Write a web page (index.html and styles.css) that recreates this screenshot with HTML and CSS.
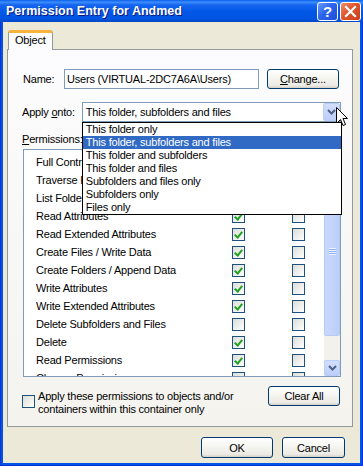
FILE: index.html
```html
<!DOCTYPE html>
<html lang="en">
<head>
    <meta charset="UTF-8">
    <title>Permission Entry for Andmed</title>
    <link rel="stylesheet" href="styles.css">
</head>
<body>
    <div class="window">
        <div class="titlebar">
            <span class="title">Permission Entry for Andmed</span>
            <span class="cap cap-help">?</span>
            <span class="cap cap-close">
                <svg viewBox="0 0 19 17" width="19" height="17">
                    <path d="M5 4 L14 13 M14 4 L5 13" stroke="#fff" stroke-width="2.2" stroke-linecap="square"/>
                </svg>
            </span>
        </div>

        <div class="client">
            <div class="tabs">
                <div class="tab">Object</div>
            </div>

            <div class="page">
                <div class="name-row">
                    <span class="lbl lbl-name">Name:</span>
                    <div class="textbox">Users (VIRTUAL-2DC7A6A\Users)</div>
                    <button class="btn btn-change"><u>C</u>hange...</button>
                </div>

                <div class="apply-row">
                    <span class="lbl lbl-apply">Apply <u>o</u>nto:</span>
                    <div class="combo">
                        <span class="combo-value">This folder, subfolders and files</span>
                        <span class="arrow-btn combo-arrow">
                            <svg viewBox="0 0 9 6" width="9" height="6"><path d="M1 1 L4.5 4.5 L8 1" fill="none" stroke="#4d6185" stroke-width="2"/></svg>
                        </span>
                        <ul class="dropdown">
                            <li>This folder only</li>
                            <li class="selected">This folder, subfolders and files</li>
                            <li>This folder and subfolders</li>
                            <li>This folder and files</li>
                            <li>Subfolders and files only</li>
                            <li>Subfolders only</li>
                            <li>Files only</li>
                        </ul>
                    </div>
                </div>

                <div class="perm-header">
                    <span class="perm-label"><u>P</u>ermissions:</span>
                    <span class="col-head">Allow</span>
                    <span class="col-head">Deny</span>
                </div>

                <div class="perm-list">
                    <div class="perm-rows">
                        <div class="row"><span class="perm-name">Full Control</span><span class="check"></span><span class="check"></span></div>
                        <div class="row"><span class="perm-name">Traverse Folder / Execute File</span><span class="check on"></span><span class="check"></span></div>
                        <div class="row"><span class="perm-name">List Folder / Read Data</span><span class="check on"></span><span class="check"></span></div>
                        <div class="row"><span class="perm-name">Read Attributes</span><span class="check on"></span><span class="check"></span></div>
                        <div class="row"><span class="perm-name">Read Extended Attributes</span><span class="check on"></span><span class="check"></span></div>
                        <div class="row"><span class="perm-name">Create Files / Write Data</span><span class="check on"></span><span class="check"></span></div>
                        <div class="row"><span class="perm-name">Create Folders / Append Data</span><span class="check on"></span><span class="check"></span></div>
                        <div class="row"><span class="perm-name">Write Attributes</span><span class="check on"></span><span class="check"></span></div>
                        <div class="row"><span class="perm-name">Write Extended Attributes</span><span class="check on"></span><span class="check"></span></div>
                        <div class="row"><span class="perm-name">Delete Subfolders and Files</span><span class="check"></span><span class="check"></span></div>
                        <div class="row"><span class="perm-name">Delete</span><span class="check on"></span><span class="check"></span></div>
                        <div class="row"><span class="perm-name">Read Permissions</span><span class="check on"></span><span class="check"></span></div>
                        <div class="row"><span class="perm-name">Change Permissions</span><span class="check"></span><span class="check"></span></div>
                    </div>
                    <div class="scrollbar">
                        <span class="arrow-btn sb-btn">
                            <svg viewBox="0 0 9 6" width="9" height="6"><path d="M1 5 L4.5 1.5 L8 5" fill="none" stroke="#4d6185" stroke-width="2"/></svg>
                        </span>
                        <span class="sb-thumb"><span class="grip"></span></span>
                        <span class="sb-track"></span>
                        <span class="arrow-btn sb-btn">
                            <svg viewBox="0 0 9 6" width="9" height="6"><path d="M1 1 L4.5 4.5 L8 1" fill="none" stroke="#4d6185" stroke-width="2"/></svg>
                        </span>
                    </div>
                </div>

                <div class="inherit-row">
                    <span class="check"></span>
                    <span class="inherit-text">Apply these permissions to objects and/or<br>containers within this container only</span>
                    <button class="btn btn-clear">Clear All</button>
                </div>
            </div>

            <div class="dialog-buttons">
                <button class="btn btn-ok">OK</button>
                <button class="btn btn-cancel">Cancel</button>
            </div>
        </div>

        <svg class="cursor" viewBox="0 0 12 20" width="12" height="20">
            <path d="M0.5 0.5 L0.5 16.5 L4.5 12.5 L7 18.5 L9.5 17.5 L7 11.5 L11.5 11.5 Z" fill="#fff" stroke="#000" stroke-width="1"/>
        </svg>
    </div>
</body>
</html>
```

FILE: styles.css
```css
* {
    margin: 0;
    padding: 0;
    box-sizing: border-box;
}

body {
    width: 363px;
    height: 466px;
    overflow: hidden;
    font-family: "Liberation Sans", Arial, sans-serif;
    font-size: 11px;
    letter-spacing: -0.2px;
    color: #000;
    background: #ece9d8;
}

.window {
    position: relative;
    width: 363px;
    height: 466px;
    display: flex;
    flex-direction: column;
    background: #0055e5;
    border: 1px solid #0831d9;
    border-top: none;
}

/* title bar */
.titlebar {
    height: 22px;
    margin: 0 -1px;
    display: flex;
    align-items: center;
    gap: 2px;
    padding: 0 2px 0 6px;
    background: linear-gradient(to bottom, #0a5fee 0%, #3d8ffc 10%, #1665f0 22%, #0058e6 55%, #0054e2 85%, #0347c6 100%);
}

.title {
    flex: 1;
    color: #fff;
    font-size: 12.5px;
    font-weight: 700;
    letter-spacing: 0;
    text-shadow: 1px 1px #0a1883;
}

.cap {
    width: 21px;
    height: 19px;
    border: 1px solid #fff;
    border-radius: 3px;
    display: flex;
    align-items: center;
    justify-content: center;
    color: #fff;
    font-weight: 700;
    font-size: 15px;
}

.cap-help {
    background: linear-gradient(135deg, #6b9cf8 0%, #2a64ee 45%, #1c50d8 100%);
}

.cap-close {
    background: linear-gradient(135deg, #f09070 0%, #e0542a 45%, #c8401a 100%);
}

/* client area */
.client {
    flex: 1;
    margin: 0 2px 2px;
    background: #ece9d8;
    padding: 8px 7px 0 4px;
    display: flex;
    flex-direction: column;
}

.tabs {
    display: flex;
    height: 19px;
    padding-left: 1px;
    position: relative;
    z-index: 1;
}

.tab {
    width: 45px;
    height: 20px;
    background: #fcfcfe;
    border: 1px solid #919b9c;
    border-bottom: none;
    border-top: 3px solid #f8b33c;
    border-radius: 3px 3px 0 0;
    padding: 1px 0 0 6px;
}

.page {
    height: 378px;
    border: 1px solid #919b9c;
    background: linear-gradient(to bottom, #fcfcfe, #f4f3ee);
    padding: 19px 11px 0 14px;
}

.name-row,
.apply-row {
    display: flex;
    align-items: center;
    height: 20px;
}

.apply-row {
    margin-top: 13px;
}

.lbl-name {
    width: 41px;
    margin-left: 1px;
}

.lbl-apply {
    width: 60px;
}

.textbox {
    width: 195px;
    height: 20px;
    border: 1px solid #7f9db9;
    background: #fff;
    padding: 3px 2px 0;
}

.btn {
    font: inherit;
    letter-spacing: inherit;
    color: #000;
    height: 20px;
    border: 1px solid #003c74;
    border-radius: 3px;
    background: linear-gradient(to bottom, #ffffff 0%, #f6f6f2 40%, #ecebe5 85%, #d6d0c5 100%);
}

.btn-change {
    width: 72px;
    margin-left: 8px;
}

/* combo box */
.combo {
    position: relative;
    width: 260px;
    height: 20px;
    border: 1px solid #7f9db9;
    background: #fff;
    display: flex;
    align-items: center;
    padding-left: 3px;
}

.combo-value {
    flex: 1;
}

.arrow-btn {
    display: flex;
    align-items: center;
    justify-content: center;
    background: linear-gradient(to bottom, #d2defc, #bccef9);
    border: 1px solid #b9cdf6;
    border-radius: 2px;
}

.combo-arrow {
    width: 17px;
    height: 18px;
    margin-right: 0;
}

.dropdown {
    position: absolute;
    top: 19px;
    left: -1px;
    width: 260px;
    list-style: none;
    background: #fff;
    border: 1px solid #000;
    z-index: 2;
}

.dropdown li {
    height: 13px;
    line-height: 13px;
    padding-left: 3px;
}

.dropdown .selected {
    background: #316ac5;
    color: #fff;
}

/* permissions list */
.perm-header {
    display: flex;
    height: 13px;
    line-height: 13px;
    margin-top: 11px;
}

.perm-label {
    width: 203px;
}

.col-head {
    width: 60px;
}

.perm-list {
    margin: 3px 0 0 1px;
    width: 318px;
    height: 228px;
    border: 1px solid #7f9db9;
    background: #fff;
    display: flex;
}

.perm-rows {
    flex: 1;
    padding-top: 3px;
    overflow: hidden;
}

.row {
    height: 18px;
    display: flex;
    align-items: center;
    padding-left: 12px;
}

.perm-name {
    width: 196px;
    white-space: nowrap;
    overflow: hidden;
}

.row .check + .check {
    margin-left: 47px;
}

.check {
    width: 13px;
    height: 13px;
    flex: none;
    border: 1px solid #1c5180;
    background: linear-gradient(135deg, #dcdcd7, #ffffff);
    position: relative;
}

.check.on::after {
    content: "";
    position: absolute;
    left: 3px;
    top: 1px;
    width: 3px;
    height: 6px;
    border-right: 2px solid #21a121;
    border-bottom: 2px solid #21a121;
    transform: rotate(40deg);
}

.scrollbar {
    width: 16px;
    display: flex;
    flex-direction: column;
    background: #f3f1ec;
}

.sb-btn {
    height: 16px;
    flex: none;
}

.sb-thumb {
    height: 170px;
    flex: none;
    border: 1px solid #b6caf4;
    border-radius: 2px;
    background: linear-gradient(to right, #c9d8fc, #bccefa);
    display: flex;
    align-items: center;
    justify-content: center;
}

.grip {
    width: 7px;
    height: 7px;
    background: repeating-linear-gradient(to bottom, #eef3fe 0 1px, #8cb0f8 1px 2px);
}

.sb-track {
    flex: 1;
}

/* inherit option */
.inherit-row {
    display: flex;
    align-items: flex-start;
    margin-top: 9px;
}

.inherit-row > .check {
    margin-top: 9px;
}

.inherit-text {
    margin: 4px 0 0 3px;
    line-height: 13px;
}

.btn-clear {
    width: 72px;
    margin: 0 1px 0 auto;
}

/* dialog buttons */
.dialog-buttons {
    display: flex;
    justify-content: flex-end;
    gap: 9px;
    margin-top: 10px;
    padding-right: 8px;
}

.btn-ok,
.btn-cancel {
    height: 21px;
}

.btn-ok {
    width: 72px;
}

.btn-cancel {
    width: 63px;
}

.cursor {
    position: absolute;
    left: 335px;
    top: 107px;
}
```
